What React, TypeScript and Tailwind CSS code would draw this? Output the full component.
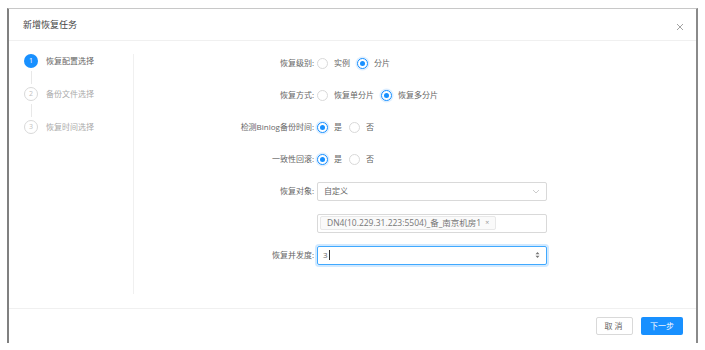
import React from "react";

const font = { fontFamily: '"Open Sans", "Noto Sans CJK SC", sans-serif' };

function Radio({ checked, label }: { checked?: boolean; label: string }) {
  return (
    <div className="flex items-center mr-[7px]">
      <span
        className={`w-[11px] h-[11px] rounded-full border flex items-center justify-center bg-white ${
          checked ? "border-[#1890ff] shadow-[0_0_0_1.5px_rgba(24,144,255,0.15)]" : "border-[#d9d9d9]"
        }`}
      >
        {checked && <span className="w-[5px] h-[5px] rounded-full bg-[#1890ff]" />}
      </span>
      <span className="ml-[6px] text-[8px] text-[#666]">{label}</span>
    </div>
  );
}

function Row({ label, children }: { label?: string; children: React.ReactNode }) {
  return (
    <div className="flex items-center h-[32px]">
      <div className="w-[183px] text-right text-[8px] text-[#666] pr-[3px]">{label ? `${label}:` : ""}</div>
      <div className="flex items-center">{children}</div>
    </div>
  );
}

function Step({ n, label, active, last }: { n: number; label: string; active?: boolean; last?: boolean }) {
  return (
    <div className="flex flex-col">
      <div className="flex items-center h-[14px]">
        <span
          className={`w-[14px] h-[14px] rounded-full flex items-center justify-center text-[7px] ${
            active ? "bg-[#1890ff] text-white" : "border border-[#d9d9d9] text-[#bfbfbf] bg-white"
          }`}
        >
          {n}
        </span>
        <span className={`ml-[8px] text-[8px] ${active ? "text-[#666]" : "text-[#aaa]"}`}>{label}</span>
      </div>
      {!last && (
        <div className="w-[14px] flex justify-center h-[19px] py-[3px]">
          <div className="w-px h-full bg-[#e8e8e8]" />
        </div>
      )}
    </div>
  );
}

export default function App() {
  return (
    <div className="w-[705px] h-[350px] bg-white pt-[8px] px-[7px] overflow-hidden" style={font}>
      <div className="h-[335px] border-t border-t-[#c8c8c8] border-l-2 border-r-2 border-l-[#808080] border-r-[#8a8a8a] flex flex-col bg-white">
        <div className="h-[32px] flex items-center justify-between border-b border-[#f0f0f0] pl-[14px] pr-[12px]">
          <span className="text-[9px] text-[#444]">新增恢复任务</span>
          <svg width="8" height="8" viewBox="0 0 8 8" className="mt-[4px]">
            <path d="M1 1L7 7M7 1L1 7" stroke="#999" strokeWidth="0.9" />
          </svg>
        </div>
        <div className="flex-1 flex">
          <div className="w-[124px] pl-[15px] pt-[13px]">
            <Step n={1} label="恢复配置选择" active />
            <Step n={2} label="备份文件选择" />
            <Step n={3} label="恢复时间选择" last />
          </div>
          <div className="w-px bg-[#f0f0f0] mt-[13px] mb-[14px]" />
          <div className="flex-1 pt-[6px]">
            <Row label="恢复级别">
              <Radio label="实例" />
              <Radio label="分片" checked />
            </Row>
            <Row label="恢复方式">
              <Radio label="恢复单分片" />
              <Radio label="恢复多分片" checked />
            </Row>
            <Row label="检测Binlog备份时间">
              <Radio label="是" checked />
              <Radio label="否" />
            </Row>
            <Row label="一致性回滚">
              <Radio label="是" checked />
              <Radio label="否" />
            </Row>
            <Row label="恢复对象">
              <div className="w-[230px] h-[19px] border border-[#d9d9d9] rounded-[2px] flex items-center justify-between px-[6px]">
                <span className="text-[8px] text-[#666]">自定义</span>
                <svg width="8" height="5" viewBox="0 0 8 5">
                  <path d="M1 1L4 4L7 1" stroke="#bfbfbf" strokeWidth="0.8" fill="none" />
                </svg>
              </div>
            </Row>
            <Row>
              <div className="w-[230px] h-[19px] border border-[#d9d9d9] rounded-[2px] flex items-center px-[2px]">
                <span className="h-[14px] flex items-center bg-[#fafafa] border border-[#e8e8e8] rounded-[2px] px-[6px] text-[8.5px] text-[#777]">
                  DN4(10.229.31.223:5504)_备_南京机房1
                  <span className="ml-[4px] text-[7px] text-[#999]">×</span>
                </span>
              </div>
            </Row>
            <Row label="恢复并发度">
              <div className="w-[230px] h-[19px] border border-[#40a9ff] rounded-[2px] shadow-[0_0_0_2px_rgba(24,144,255,0.2)] flex items-center justify-between pl-[5px] pr-[6px]">
                <span className="text-[8px] text-[#666] flex items-center">
                  3<span className="w-px h-[10px] bg-[#333] ml-[1px]" />
                </span>
                <svg width="5" height="8" viewBox="0 0 5 8">
                  <path d="M0.5 3.2L2.5 1L4.5 3.2Z M0.5 4.8L2.5 7L4.5 4.8Z" fill="#777" />
                </svg>
              </div>
            </Row>
          </div>
        </div>
        <div className="h-[35px] border-t border-[#f0f0f0] flex items-center justify-end pr-[13px] gap-[8px]">
          <button className="w-[37px] h-[18px] border border-[#d9d9d9] rounded-[2px] bg-white text-[8px] text-[#666] tracking-[2px]">
            取消
          </button>
          <button className="w-[42px] h-[18px] rounded-[2px] bg-[#1890ff] text-[8px] text-white">下一步</button>
        </div>
      </div>
    </div>
  );
}
